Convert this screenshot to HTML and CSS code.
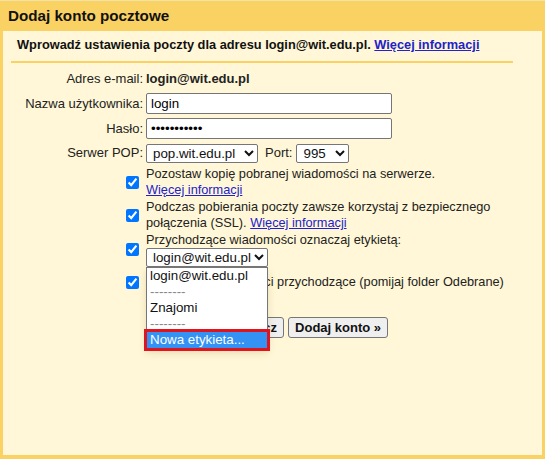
FILE: index.html
```html
<!DOCTYPE html>
<html lang="pl">
<head>
  <meta charset="UTF-8">
  <title>Dodaj konto pocztowe</title>
  <link rel="stylesheet" href="styles.css">
</head>
<body>
  <div class="dialog">
    <div class="title">Dodaj konto pocztowe</div>
    <div class="panel">
      <div class="intro">Wprowadź ustawienia poczty dla adresu login@wit.edu.pl. <a href="#">Więcej informacji</a></div>

      <div class="form">
        <div class="label">Adres e-mail:</div>
        <div class="value"><b>login@wit.edu.pl</b></div>

        <label class="label spaced" for="user">Nazwa użytkownika:</label>
        <div class="value spaced"><input class="text" id="user" type="text" value="login"></div>

        <label class="label spaced" for="pass">Hasło:</label>
        <div class="value spaced"><input class="text" id="pass" type="password" value="loginlogin1"></div>

        <label class="label spaced" for="server">Serwer POP:</label>
        <div class="value server spaced">
          <select class="select-server" id="server"><option>pop.wit.edu.pl</option></select>
          <label for="port">Port:</label>
          <select class="select-port" id="port"><option>995</option></select>
        </div>

        <div class="check first"><input type="checkbox" checked></div>
        <div class="opt first">Pozostaw kopię pobranej wiadomości na serwerze.<br><a href="#">Więcej informacji</a></div>

        <div class="check"><input type="checkbox" checked></div>
        <div class="opt">Podczas pobierania poczty zawsze korzystaj z bezpiecznego połączenia (SSL). <a href="#">Więcej informacji</a></div>

        <div class="check"><input type="checkbox" checked></div>
        <div class="opt">Przychodzące wiadomości oznaczaj etykietą:
          <div class="label-pick">
            <select class="select-label"><option>login@wit.edu.pl</option></select>
            <ul class="dropdown">
              <li>login@wit.edu.pl</li>
              <li class="sep">--------</li>
              <li>Znajomi</li>
              <li class="sep">--------</li>
              <li class="active">Nowa etykieta...</li>
            </ul>
          </div>
        </div>

        <div class="check archive"><input type="checkbox" checked></div>
        <div class="opt archive">Archiwizuj wiadomości przychodzące (pomijaj folder Odebrane)</div>

        <div></div>
        <div class="buttons">
          <button type="button">Anuluj</button>
          <button type="button">« Wstecz</button>
          <button type="button">Dodaj konto »</button>
        </div>
      </div>
    </div>
  </div>
</body>
</html>
```

FILE: styles.css
```css
body {
  margin: 0;
  font-family: "Liberation Sans", Arial, sans-serif;
  font-size: 13px;
  color: #222;
}

a {
  color: #2222cc;
}

.dialog {
  height: 100vh;
  box-sizing: border-box;
  background-color: #fad163;
  border-top: 1px solid #f1e2a6;
  display: flex;
  flex-direction: column;
}

.title {
  height: 30px;
  line-height: 30px;
  padding-left: 8px;
  font-size: 15.2px;
  font-weight: bold;
  color: #111;
}

.panel {
  flex: 1;
  margin: 0 3px 4px;
  background-color: #fff7d7;
}

.intro {
  margin: 0 29px 0 8px;
  padding: 6px 6px 8px;
  line-height: 16px;
  font-size: 12.8px;
  font-weight: bold;
  color: #111;
  border-bottom: 2px solid #fad163;
}

.form {
  display: grid;
  grid-template-columns: 140px 1fr;
  column-gap: 3px;
  row-gap: 1px;
  align-items: center;
  padding-top: 6px;
}

.spaced {
  margin-top: 3px;
}

.first {
  margin-top: 2px;
}

.archive {
  margin-top: 6px;
}

.label {
  text-align: right;
  line-height: 20px;
}

.value {
  line-height: 20px;
}

input.text {
  box-sizing: border-box;
  width: 246px;
  height: 21px;
  margin: 0;
  padding: 1px 4px;
  border: 1px solid #767676;
  border-radius: 2px;
  background: #fff;
  font-family: "Liberation Sans", Arial, sans-serif;
  font-size: 13.33px;
  display: block;
}

select {
  height: 19px;
  margin: 0;
  padding: 0 0 0 2px;
  border: 1px solid #767676;
  border-radius: 2px;
  background: #fff;
  font-family: "Liberation Sans", Arial, sans-serif;
  font-size: 13.33px;
  color: #111;
}

.server {
  display: flex;
  align-items: center;
  gap: 7px;
}

.select-server {
  width: 112px;
}

.select-port {
  width: 53px;
  margin-left: -3px;
}

.check {
  justify-self: end;
  margin-right: 4px;
}

.check input {
  width: 13px;
  height: 13px;
  margin: 0;
  display: block;
}

.opt {
  line-height: 16px;
  font-size: 12.75px;
  padding-right: 20px;
}

.label-pick {
  position: relative;
  width: 122px;
}

.select-label {
  width: 122px;
  display: block;
}

.dropdown {
  position: absolute;
  left: 0;
  top: 100%;
  width: 122px;
  box-sizing: border-box;
  margin: 0;
  padding: 0;
  list-style: none;
  background: #fff;
  border: 1px solid #767676;
  box-shadow: 0 4px 8px rgba(120, 100, 40, 0.18);
  font-size: 13.33px;
  line-height: 16px;
  z-index: 2;
}

.dropdown li {
  padding-left: 3px;
  color: #111;
}

.dropdown .sep {
  color: #888;
}

.dropdown .active {
  background: #3392f3;
  color: #fff;
  outline: 3px solid #e0141c;
}

.buttons {
  display: flex;
  gap: 4px;
  margin-top: 26px;
  margin-left: 10px;
}

button {
  height: 21px;
  padding: 0 6px;
  border: 1px solid #767676;
  border-radius: 3px;
  background: #efefef;
  font-family: "Liberation Sans", Arial, sans-serif;
  font-size: 13px;
  font-weight: bold;
  color: #111;
}
```
